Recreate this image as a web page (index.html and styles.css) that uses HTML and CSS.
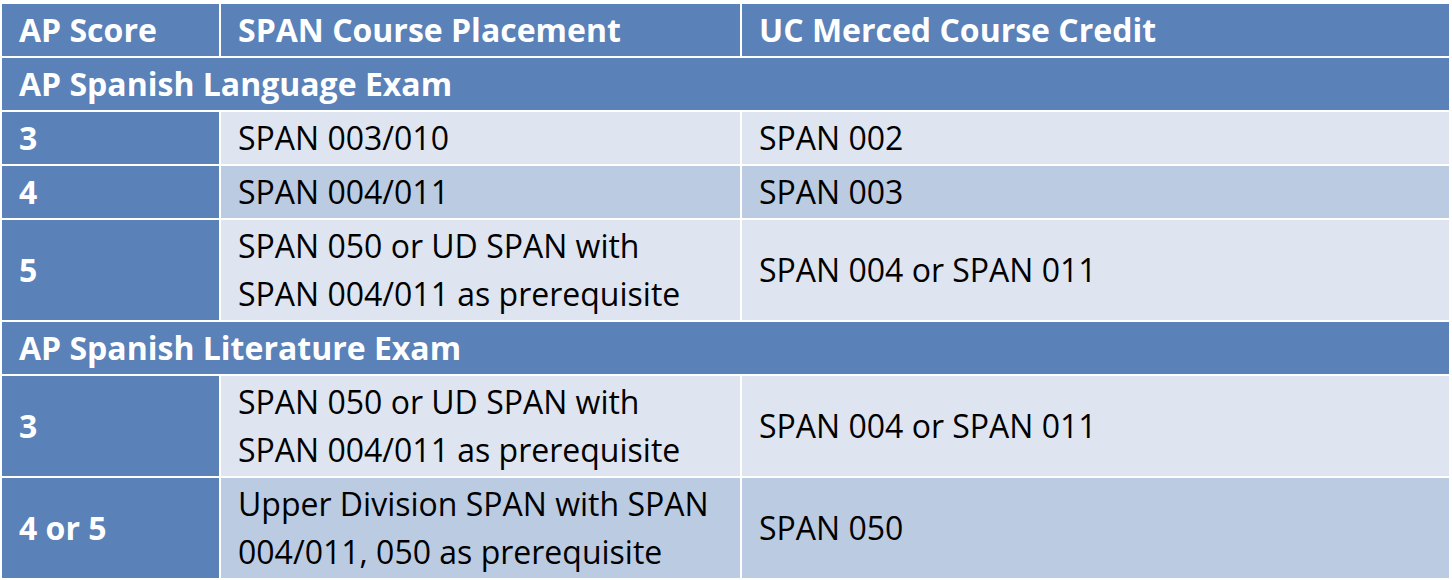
FILE: index.html
```html
<!DOCTYPE html>
<html>
<head>
<meta charset="utf-8">
<link rel="stylesheet" href="styles.css">
</head>
<body>
<table class="ap">
  <colgroup>
    <col class="c1">
    <col class="c2">
    <col class="c3">
  </colgroup>
  <tr class="head">
    <th>AP Score</th>
    <th>SPAN Course Placement</th>
    <th>UC Merced Course Credit</th>
  </tr>
  <tr class="section">
    <th colspan="3">AP Spanish Language Exam</th>
  </tr>
  <tr class="light">
    <th class="score">3</th>
    <td>SPAN 003/010</td>
    <td>SPAN 002</td>
  </tr>
  <tr class="dark">
    <th class="score">4</th>
    <td>SPAN 004/011</td>
    <td>SPAN 003</td>
  </tr>
  <tr class="light">
    <th class="score">5</th>
    <td>SPAN 050 or UD SPAN with<br>SPAN 004/011 as prerequisite</td>
    <td>SPAN 004 or SPAN 011</td>
  </tr>
  <tr class="section">
    <th colspan="3">AP Spanish Literature Exam</th>
  </tr>
  <tr class="light">
    <th class="score">3</th>
    <td>SPAN 050 or UD SPAN with<br>SPAN 004/011 as prerequisite</td>
    <td>SPAN 004 or SPAN 011</td>
  </tr>
  <tr class="dark">
    <th class="score">4 or 5</th>
    <td>Upper Division SPAN with SPAN<br>004/011, 050 as prerequisite</td>
    <td>SPAN 050</td>
  </tr>
</table>
</body>
</html>
```

FILE: styles.css
```css
html, body {
  margin: 0;
  padding: 0;
  background: #ffffff;
}
body {
  padding-top: 2px;
  font-family: "Open Sans", "Liberation Sans", sans-serif;
}
.ap {
  width: 1451px;
  table-layout: fixed;
  border-collapse: separate;
  border-spacing: 2px;
  font-size: 32px;
  line-height: 48px;
}
.c1 { width: 217px; }
.c2 { width: 519px; }
.ap th, .ap td {
  padding: 2px 17px;
  text-align: left;
  vertical-align: middle;
  white-space: nowrap;
}
.ap th {
  background: #5a81b8;
  color: #ffffff;
  font-weight: 700;
}
.ap td {
  color: #000000;
  font-weight: 400;
}
.light td { background: #dee5f0; }
.dark td { background: #bbcbe2; }
```
